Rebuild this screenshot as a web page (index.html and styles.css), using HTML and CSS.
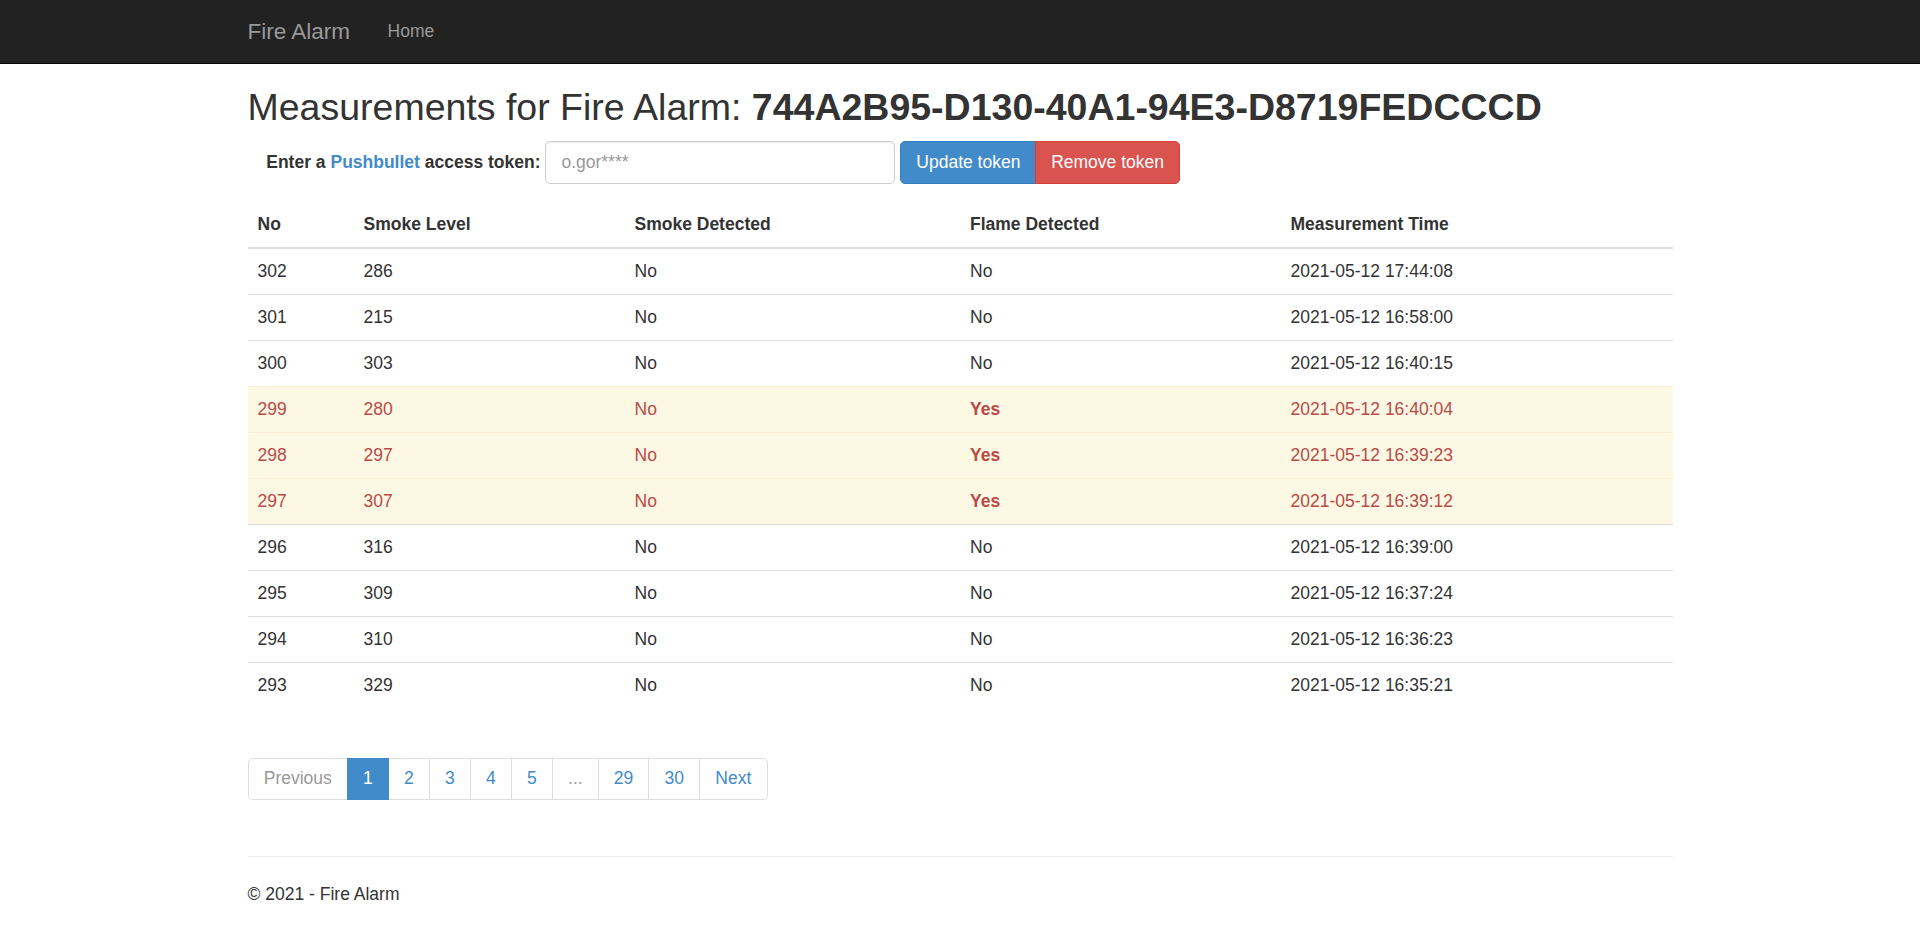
FILE: index.html
```html
<!DOCTYPE html>
<html lang="en">
<head>
<meta charset="utf-8">
<title>Measurements - Fire Alarm</title>
<link rel="stylesheet" href="styles.css">
</head>
<body>
<header class="navbar">
  <div class="container nav-inner">
    <a class="brand" href="#">Fire Alarm</a>
    <a class="nav-link" href="#">Home</a>
  </div>
</header>
<main class="container">
  <h2 class="title">Measurements for Fire Alarm: <b>744A2B95-D130-40A1-94E3-D8719FEDCCCD</b></h2>
  <form class="token-form">
    <label class="token-label" for="token">Enter a <a class="link" href="#">Pushbullet</a> access token:</label>
    <input class="token-input" id="token" type="text" placeholder="o.gor****">
    <div class="btn-group">
      <button type="button" class="btn btn-primary">Update token</button><button type="button" class="btn btn-danger">Remove token</button>
    </div>
  </form>
  <table class="table">
    <colgroup>
      <col class="c1"><col class="c2"><col class="c3"><col class="c4"><col class="c5">
    </colgroup>
    <thead>
      <tr><th>No</th><th>Smoke Level</th><th>Smoke Detected</th><th>Flame Detected</th><th>Measurement Time</th></tr>
    </thead>
    <tbody>
      <tr><td>302</td><td>286</td><td>No</td><td>No</td><td>2021-05-12 17:44:08</td></tr>
      <tr><td>301</td><td>215</td><td>No</td><td>No</td><td>2021-05-12 16:58:00</td></tr>
      <tr><td>300</td><td>303</td><td>No</td><td>No</td><td>2021-05-12 16:40:15</td></tr>
      <tr class="warning"><td>299</td><td>280</td><td>No</td><td><b>Yes</b></td><td>2021-05-12 16:40:04</td></tr>
      <tr class="warning"><td>298</td><td>297</td><td>No</td><td><b>Yes</b></td><td>2021-05-12 16:39:23</td></tr>
      <tr class="warning"><td>297</td><td>307</td><td>No</td><td><b>Yes</b></td><td>2021-05-12 16:39:12</td></tr>
      <tr><td>296</td><td>316</td><td>No</td><td>No</td><td>2021-05-12 16:39:00</td></tr>
      <tr><td>295</td><td>309</td><td>No</td><td>No</td><td>2021-05-12 16:37:24</td></tr>
      <tr><td>294</td><td>310</td><td>No</td><td>No</td><td>2021-05-12 16:36:23</td></tr>
      <tr><td>293</td><td>329</td><td>No</td><td>No</td><td>2021-05-12 16:35:21</td></tr>
    </tbody>
  </table>
  <ul class="pagination">
    <li class="disabled"><span>Previous</span></li>
    <li class="active"><span>1</span></li>
    <li><a href="#">2</a></li>
    <li><a href="#">3</a></li>
    <li><a href="#">4</a></li>
    <li><a href="#">5</a></li>
    <li class="disabled"><span>...</span></li>
    <li><a href="#">29</a></li>
    <li><a href="#">30</a></li>
    <li class="last"><a href="#">Next</a></li>
  </ul>
  <hr class="rule">
  <footer class="footer">
    <p>&copy; 2021 - Fire Alarm</p>
  </footer>
</main>
</body>
</html>
```

FILE: styles.css
```css
* { box-sizing: border-box; }

html, body { margin: 0; padding: 0; }

body {
  font-family: "Liberation Sans", Arial, Helvetica, sans-serif;
  font-size: 17.5px;
  line-height: 25px;
  color: #333;
  background: #fff;
}

a { text-decoration: none; }

.container {
  width: 1462.5px;
  margin: 0 auto;
  padding: 0 18.75px;
}

/* navbar */
.navbar {
  background: #222;
  border-bottom: 1.25px solid #080808;
}
.nav-inner {
  display: flex;
  align-items: stretch;
  height: 62.5px;
}
.brand {
  color: #999;
  font-size: 22.5px;
  line-height: 25px;
  padding: 18.75px;
  margin-left: -18.75px;
  height: 62.5px;
}
.nav-link {
  color: #999;
  padding: 18.75px;
  line-height: 25px;
}

/* heading */
.title {
  font-size: 37.5px;
  font-weight: 400;
  line-height: 41.25px;
  margin: 23.75px 0 12.5px;
  color: #333;
}
.title b { font-weight: 700; }

/* token form */
.token-form {
  display: flex;
  align-items: center;
  gap: 4.9px;
  margin: 0 0 18.75px;
}
.token-label {
  font-weight: 700;
  padding-left: 18.75px;
}
.link { color: #428bca; }
.token-input {
  width: 350px;
  height: 42.5px;
  padding: 7.5px 15px;
  font-family: inherit;
  font-size: 17.5px;
  line-height: 25px;
  color: #555;
  border: 1.25px solid #ccc;
  border-radius: 5px;
  box-shadow: inset 0 1.25px 1.25px rgba(0,0,0,0.075);
  outline: none;
}
.token-input::placeholder { color: #999; }
.btn-group { display: flex; }
.btn {
  font-family: inherit;
  font-size: 17.5px;
  line-height: 25px;
  padding: 7.5px 15px;
  border: 1.25px solid transparent;
  color: #fff;
  margin: 0;
  cursor: pointer;
  height: 42.5px;
}
.btn-primary {
  background: #428bca;
  border-color: #357ebd;
  border-radius: 5px 0 0 5px;
}
.btn-danger {
  background: #d9534f;
  border-color: #d43f3a;
  border-radius: 0 5px 5px 0;
  margin-left: -1.25px;
}

/* table */
.table {
  width: 100%;
  border-collapse: collapse;
  border-spacing: 0;
  table-layout: fixed;
  margin-bottom: 0;
}
.c1 { width: 106px; }
.c2 { width: 271px; }
.c3 { width: 335.5px; }
.c4 { width: 320.5px; }
.c5 { width: 392px; }
.table th,
.table td {
  padding: 10px;
  line-height: 25px;
  text-align: left;
  vertical-align: top;
  border-top: 1.25px solid #ddd;
}
.table th {
  font-weight: 700;
  vertical-align: bottom;
  border-top: 0;
  border-bottom: 2.5px solid #ddd;
}
.table tr.warning td {
  background: #fcf8e3;
  border-top-color: #fbeed5;
  color: #b94a48;
}

/* pagination */
.pagination {
  display: flex;
  list-style: none;
  padding: 0;
  margin: 49.5px 0 56px;
}
.pagination li > a,
.pagination li > span {
  display: block;
  padding: 7.5px 15.25px;
  line-height: 25px;
  color: #428bca;
  background: #fff;
  border: 1.25px solid #ddd;
  margin-left: -1.25px;
}
.pagination li:first-child > span {
  margin-left: 0;
  border-radius: 5px 0 0 5px;
}
.pagination li.last > a { border-radius: 0 5px 5px 0; }
.pagination li.disabled > span { color: #999; }
.pagination li.active > span {
  background: #428bca;
  border-color: #428bca;
  color: #fff;
  position: relative;
}

/* footer */
.rule {
  margin: 0 0 25px;
  border: 0;
  border-top: 1.25px solid #eee;
}
.footer p { margin: 0 0 12.5px; }
```
